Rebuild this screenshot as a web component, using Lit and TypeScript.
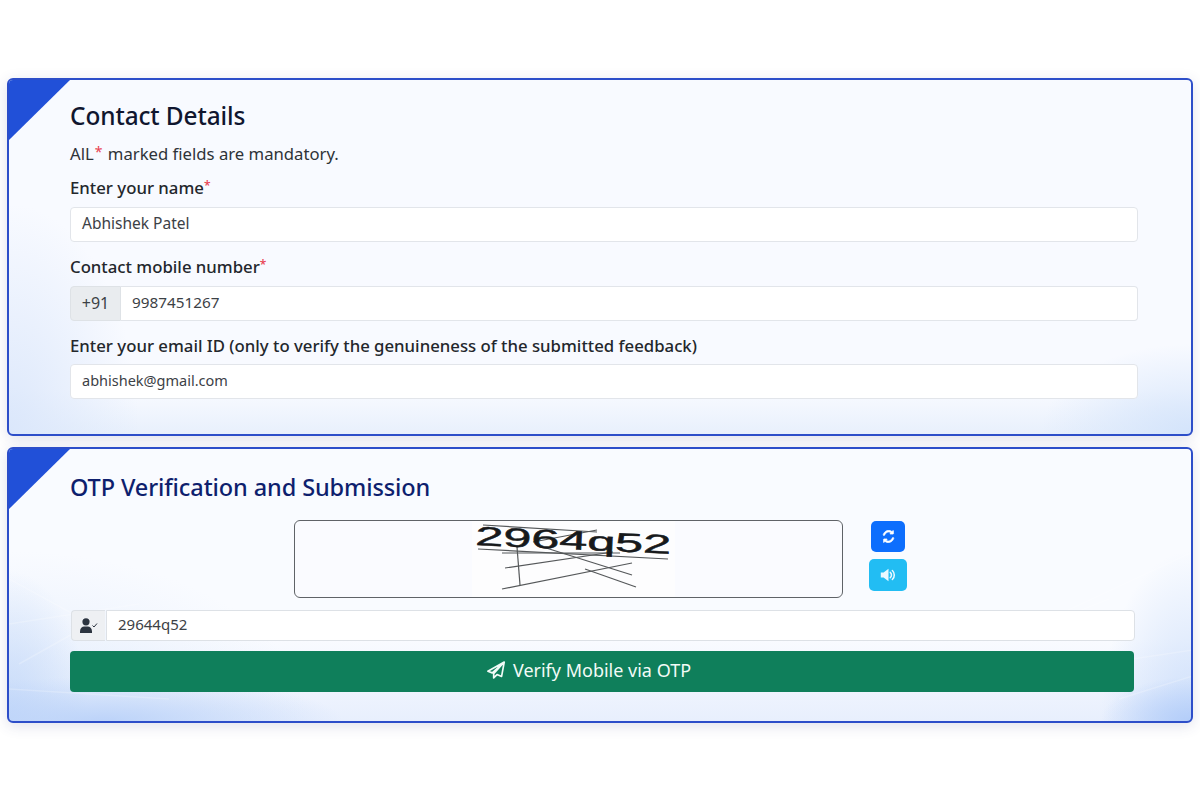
import { LitElement, html, css, svg } from "lit";
import { customElement } from "lit/decorators.js";

@customElement("app-root")
export class AppRoot extends LitElement {
  static styles = css`
    :host {
      display: block;
      width: 1200px;
      height: 800px;
      box-sizing: border-box;
      padding: 78px 7px 0;
      background: #fff;
      font-family: "Noto Sans", "Open Sans", sans-serif;
      color: #22262b;
      overflow: hidden;
    }
    .stack { display: flex; flex-direction: column; gap: 11px; }
    .card {
      position: relative;
      isolation: isolate;
      box-sizing: border-box;
      border: 2px solid #2d4ec9;
      border-radius: 6px;
      padding: 0 55px 0 61px;
      overflow: hidden;
      box-shadow: 0 3px 14px rgba(60, 70, 130, 0.16);
    }
    .card.one {
      height: 358px;
      background:
        radial-gradient(150px 90px at 100% 100%, #d4e4fb 0%, rgba(212,228,251,0) 100%),
        radial-gradient(130px 230px at 0% 100%, #dbe7fb 0%, rgba(219,231,251,0) 100%),
        linear-gradient(180deg, rgba(255,255,255,0) 88%, #e8f0fc 100%),
        #f8faff;
    }
    .card.two {
      height: 276px;
      background:
        radial-gradient(240px 44px at 8% 100%, #bcd3f9 0%, rgba(188,211,249,0) 100%),
        radial-gradient(80px 150px at 0% 100%, #c6daf9 0%, rgba(198,218,249,0) 100%),
        radial-gradient(90px 44px at 100% 100%, #b3cdf9 0%, rgba(179,205,249,0) 100%),
        radial-gradient(90px 170px at 100% 100%, #cfe0fb 0%, rgba(207,224,251,0) 100%),
        radial-gradient(300px 170px at 0% 100%, #e2ecfc 0%, rgba(226,236,252,0) 100%),
        linear-gradient(180deg, rgba(255,255,255,0) 70%, #e8effd 100%),
        #f9fbff;
    }
    .streaks { position: absolute; left: 0; top: 0; z-index: -1; }
    .corner {
      position: absolute;
      left: -2px;
      top: -2px;
      width: 65px;
      height: 64px;
      background: #2150d8;
      clip-path: polygon(0 0, 100% 0, 0 100%);
    }
    h2 { margin: 0; font-weight: 500; line-height: 32px; }
    .one h2 { padding-top: 20px; color: #10162f; font-size: 24.4px; letter-spacing: -0.1px; }
    .two h2 { padding-top: 22px; color: #0e1f6e; font-size: 23.5px; letter-spacing: -0.1px; }
    .note { margin: 11px 0 0; font-size: 16.7px; line-height: 22px; color: #2e3338; }
    .note .star { position: relative; top: -3px; margin: 0 1px; font-size: 14px; }
    .star { color: #e8404f; }
    label {
      display: block;
      font-size: 16.75px;
      font-weight: 500;
      line-height: 22px;
      color: #23272c;
    }
    label .star { font-size: 12px; vertical-align: 4px; }
    .l1 { margin-top: 9px; margin-bottom: 8px; }
    .l2 { margin-top: 12px; margin-bottom: 8px; }
    .l3 { margin-top: 14px; margin-bottom: 7px; }
    .field {
      box-sizing: border-box;
      display: flex;
      align-items: center;
      height: 35px;
      width: 1068px;
      background: #fff;
      border: 1px solid #e2e5ea;
      border-radius: 4px;
      padding: 0 11px 3px;
      font-size: 15.5px;
      color: #3c4146;
    }
    .field.email { font-size: 14.5px; }
    .field.phone { font-size: 15.3px; }
    .group { display: flex; width: 1068px; height: 35px; }
    .addon {
      box-sizing: border-box;
      width: 51px;
      flex: none;
      display: flex;
      align-items: center;
      justify-content: center;
      background: #e9ecef;
      border: 1px solid #dee2e6;
      border-radius: 4px 0 0 4px;
      padding-bottom: 2px;
      font-size: 16px;
      color: #3c4146;
    }
    .group .field { width: auto; flex: 1; border-left: none; border-radius: 0 4px 4px 0; }
    .captcha-row { display: flex; align-items: flex-start; margin: 17px 0 0 224px; }
    .captcha {
      box-sizing: border-box;
      width: 549px;
      height: 78px;
      border: 1px solid #5f6367;
      border-radius: 6px;
      background: #fafbff;
      display: flex;
      align-items: flex-start;
      justify-content: center;
    }
    .captcha svg { display: block; margin-left: 9px; }
    .captcha-btns {
      margin-left: 26px;
      width: 38px;
      display: flex;
      flex-direction: column;
      align-items: center;
      gap: 7px;
    }
    .ibtn {
      border: none;
      padding: 0;
      display: flex;
      align-items: center;
      justify-content: center;
      border-radius: 5px;
      color: #fff;
    }
    .ibtn.refresh { width: 34px; height: 31px; background: #0d6efd; margin-top: 1px; }
    .ibtn.sound { width: 38px; height: 32px; background: #22bdf3; color: #eaf9ff; }
    .otp { display: flex; width: 1064px; height: 31px; margin: 12px 0 0 1px; gap: 1px; }
    .otp .addon {
      width: 34px;
      padding-bottom: 0;
      background: #eef0f3;
      border: 1px solid #dde1e6;
      border-right: none;
    }
    .otp .field {
      flex: 1;
      width: auto;
      height: 31px;
      border: 1px solid #dde1e6;
      border-radius: 0 4px 4px 0;
      font-size: 15px;
    }
    .verify {
      display: flex;
      align-items: center;
      justify-content: center;
      gap: 7px;
      box-sizing: border-box;
      width: 1064px;
      height: 41px;
      margin-top: 10px;
      border: none;
      border-radius: 4px;
      padding: 0 27px 4px 0;
      background: #0f7f5b;
      color: #f2fbf7;
      font-family: inherit;
      font-size: 18px;
      font-weight: 400;
    }
  `;

  private captchaArt() {
    const lines = [
      [6, 28, 196, 38], [30, 32, 148, 32], [33, 47, 141, 31], [30, 68, 160, 42],
      [113, 48, 164, 66], [71, 26, 160, 54], [45, 26, 48, 64], [11, 4, 125, 11],
      [61, 21, 125, 9],
    ];
    return svg`
      <svg width="203" height="76" viewBox="0 0 203 76">
        <rect width="203" height="76" fill="#fdfdfe"></rect>
        ${lines.map(
          ([a, b, c, d]) =>
            svg`<line x1=${a} y1=${b} x2=${c} y2=${d} stroke="#55585a" stroke-width="1.2"></line>`
        )}
        <text x="3" y="24" transform="rotate(2.6 3 24)" font-family="Liberation Sans, sans-serif"
          font-size="26.5" fill="#17191b" stroke="#17191b" stroke-width="0.5"
          textLength="196" lengthAdjust="spacingAndGlyphs">2964q52</text>
      </svg>`;
  }

  private streaks() {
    const s = [
      [0, 130, 110, 190], [0, 175, 130, 155], [10, 215, 90, 170], [0, 240, 160, 250],
      [1040, 170, 1190, 100], [1090, 215, 1190, 200], [1110, 250, 1190, 225], [1000, 190, 1100, 150],
    ];
    return svg`
      <svg class="streaks" width="1186" height="276" viewBox="0 0 1186 276" fill="none">
        ${s.map(
          ([a, b, c, d]) =>
            svg`<line x1=${a} y1=${b} x2=${c} y2=${d} stroke="#fff" stroke-opacity="0.22" stroke-width="1.5"></line>`
        )}
      </svg>`;
  }

  render() {
    return html`
      <div class="stack">
        <section class="card one">
          <div class="corner"></div>
          <h2>Contact Details</h2>
          <p class="note">AlL<span class="star">*</span> marked fields are mandatory.</p>
          <label class="l1">Enter your name<span class="star">*</span></label>
          <div class="field">Abhishek Patel</div>
          <label class="l2">Contact mobile number<span class="star">*</span></label>
          <div class="group">
            <div class="addon">+91</div>
            <div class="field phone">9987451267</div>
          </div>
          <label class="l3">Enter your email ID (only to verify the genuineness of the submitted feedback)</label>
          <div class="field email">abhishek@gmail.com</div>
        </section>

        <section class="card two">
          ${this.streaks()}
          <div class="corner"></div>
          <h2>OTP Verification and Submission</h2>
          <div class="captcha-row">
            <div class="captcha">${this.captchaArt()}</div>
            <div class="captcha-btns">
              <button class="ibtn refresh" aria-label="Refresh">
                <svg width="13" height="13" viewBox="0 0 512 512" fill="#fff">
                  <path d="M105 203c12-34 31-64 60-87 54-43 129-47 187-12l-38 38c-7 7-2 20 8 20h118c7 0 12-5 12-12V32c0-10-13-16-20-8l-37 37C316 0 208-1 130 60 88 93 60 137 46 186c-4 14 6 28 21 28h18c9 0 17-4 20-11z" stroke="#fff" stroke-width="24"></path>
                  <path d="M407 309c-12 34-31 64-60 87-54 43-129 47-187 12l38-38c7-7 2-20-8-20H72c-7 0-12 5-12 12v118c0 10 13 16 20 8l37-37c79 61 187 62 265 1 42-33 70-77 84-126 4-14-6-28-21-28h-18c-9 0-17 4-20 11z" stroke="#fff" stroke-width="24"></path>
                </svg>
              </button>
              <button class="ibtn sound" aria-label="Listen">
                <svg width="17" height="14" viewBox="0 0 24 20" fill="currentColor">
                  <path d="M1 6.5h4L12 1v18l-7-5.5H1z"></path>
                  <path d="M14.5 6.2a5 5 0 0 1 0 7.6" fill="none" stroke="currentColor" stroke-width="2.2" stroke-linecap="round"></path>
                  <path d="M17.5 3.5a9 9 0 0 1 0 13" fill="none" stroke="currentColor" stroke-width="2.2" stroke-linecap="round"></path>
                </svg>
              </button>
            </div>
          </div>
          <div class="otp">
            <div class="addon">
              <svg width="18" height="15" viewBox="0 0 18 15" fill="#2c3440">
                <circle cx="6" cy="3.8" r="3.6"></circle>
                <path d="M0 15v-1.5C0 10.2 2.2 8.5 4.2 8.5h3.6c2 0 4.2 1.7 4.2 5V15z"></path>
                <path d="M12.5 7.5l1.5 1.5 3-3.5" fill="none" stroke="#2c3440" stroke-width="1"></path>
              </svg>
            </div>
            <div class="field">29644q52</div>
          </div>
          <button class="verify">
            <svg width="20" height="18" viewBox="0 0 512 512" fill="none" stroke="#f2fbf7" stroke-width="48" stroke-linejoin="round">
              <path d="M490 30 25 290l125 48L490 30 415 440 285 385l-95 95v-120L490 30"></path>
            </svg>
            Verify Mobile via OTP
          </button>
        </section>
      </div>
    `;
  }
}
